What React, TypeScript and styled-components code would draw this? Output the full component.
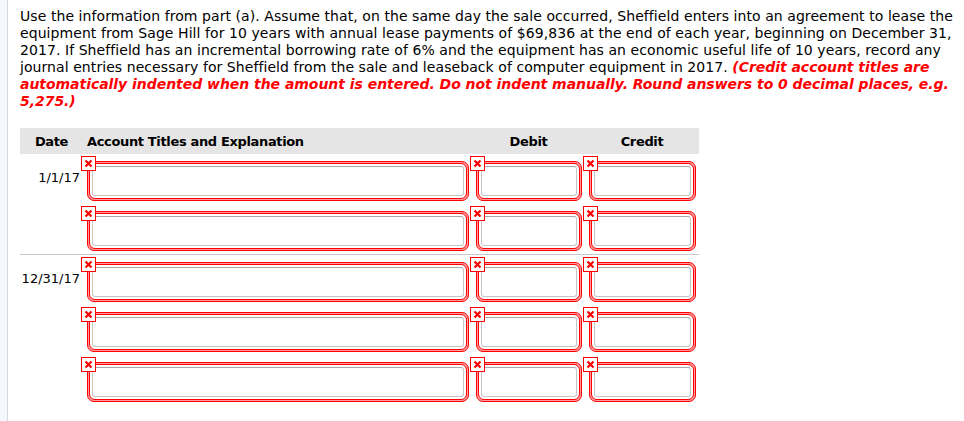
import styled, { createGlobalStyle } from "styled-components";

const GlobalStyle = createGlobalStyle`
  html, body {
    margin: 0;
    padding: 0;
    background: #ffffff;
  }
  body {
    font-family: "DejaVu Sans", Verdana, sans-serif;
    color: #000;
  }
`;

const Page = styled.div`
  display: flex;
  min-height: 421px;
`;

const Rail = styled.div`
  width: 7px;
  flex-shrink: 0;
  background: #f4f7fb;
  border-right: 1px solid #d4d9e3;
`;

const Content = styled.div`
  padding: 8px 0 0 12px;
`;

const Prompt = styled.p`
  margin: 0;
  font-size: 14px;
  line-height: 17px;
  letter-spacing: 0.07px;
  white-space: nowrap;
`;

const Hint = styled.span`
  color: #ff0000;
  font-weight: bold;
  font-style: italic;
  letter-spacing: -0.04px;
`;

const Table = styled.div`
  width: 679px;
  margin-top: 18px;
`;

const HeaderRow = styled.div`
  display: grid;
  grid-template-columns: 63px 389px 113px 114px;
  height: 26px;
  align-items: center;
  background: #e5e5e5;
  font-size: 13px;
  font-weight: bold;
  letter-spacing: -0.35px;
`;

const HeadCell = styled.div<{ $align: string; $pad?: number }>`
  text-align: ${(p) => p.$align};
  padding-left: ${(p) => p.$pad || 0}px;
`;

const Entry = styled.div<{ $divider: boolean }>`
  display: flex;
  border-bottom: ${(p) => (p.$divider ? "1px solid #c8c8c8" : "none")};
`;

const DateCell = styled.div`
  width: 63px;
  flex-shrink: 0;
  box-sizing: border-box;
  padding: 15px 3px 0 0;
  text-align: right;
  font-size: 13px;
  line-height: 17px;
`;

const Lines = styled.div`
  display: flex;
  flex-direction: column;
`;

const Line = styled.div`
  display: grid;
  grid-template-columns: 389px 113px 114px;
  height: 50px;
`;

const Cell = styled.div`
  position: relative;
  padding: 7px 3px 3px 4px;
`;

const FieldOuter = styled.div`
  box-sizing: border-box;
  height: 40px;
  border: 1px solid #ff0000;
  border-radius: 7px;
  padding: 1px;
  background: #ff9c9c;
`;

const FieldInner = styled.div`
  box-sizing: border-box;
  height: 100%;
  border: 1px solid #ff0000;
  border-radius: 6px;
  padding: 2px;
  background: #ffffff;
`;

const Input = styled.div`
  box-sizing: border-box;
  height: 100%;
  border: 1px solid #c6c6c6;
  border-top-color: #a8a8a8;
  border-radius: 3px;
  background: #ffffff;
`;

const Badge = styled.div`
  position: absolute;
  top: 2px;
  left: -2px;
  width: 15px;
  height: 15px;
  box-sizing: border-box;
  border: 1px solid #ff0000;
  background: #ffffff;
  display: flex;
  align-items: center;
  justify-content: center;
`;

function Field() {
  return (
    <Cell>
      <FieldOuter>
        <FieldInner>
          <Input />
        </FieldInner>
      </FieldOuter>
      <Badge>
        <svg width="9" height="9" viewBox="0 0 9 9">
          <path d="M1.5 1.5 L7.5 7.5 M7.5 1.5 L1.5 7.5" stroke="#ff0000" strokeWidth="2.2" />
        </svg>
      </Badge>
    </Cell>
  );
}

const entries = [
  { date: "1/1/17", lines: 2 },
  { date: "12/31/17", lines: 3 },
];

export default function App() {
  return (
    <>
      <GlobalStyle />
      <Page>
        <Rail />
        <Content>
          <Prompt>
            Use the information from part (a). Assume that, on the same day the sale occurred, Sheffield enters into an agreement to lease the
            <br />
            equipment from Sage Hill for 10 years with annual lease payments of $69,836 at the end of each year, beginning on December 31,
            <br />
            2017. If Sheffield has an incremental borrowing rate of 6% and the equipment has an economic useful life of 10 years, record any
            <br />
            journal entries necessary for Sheffield from the sale and leaseback of computer equipment in 2017.{" "}
            <Hint>(Credit account titles are</Hint>
            <br />
            <Hint>automatically indented when the amount is entered. Do not indent manually. Round answers to 0 decimal places, e.g.</Hint>
            <br />
            <Hint>5,275.)</Hint>
          </Prompt>
          <Table>
            <HeaderRow>
              <HeadCell $align="center">Date</HeadCell>
              <HeadCell $align="left" $pad={4}>Account Titles and Explanation</HeadCell>
              <HeadCell $align="center">Debit</HeadCell>
              <HeadCell $align="center">Credit</HeadCell>
            </HeaderRow>
            {entries.map((e, i) => (
              <Entry key={e.date} $divider={i < entries.length - 1}>
                <DateCell>{e.date}</DateCell>
                <Lines>
                  {Array.from({ length: e.lines }).map((_, j) => (
                    <Line key={j}>
                      <Field />
                      <Field />
                      <Field />
                    </Line>
                  ))}
                </Lines>
              </Entry>
            ))}
          </Table>
        </Content>
      </Page>
    </>
  );
}
